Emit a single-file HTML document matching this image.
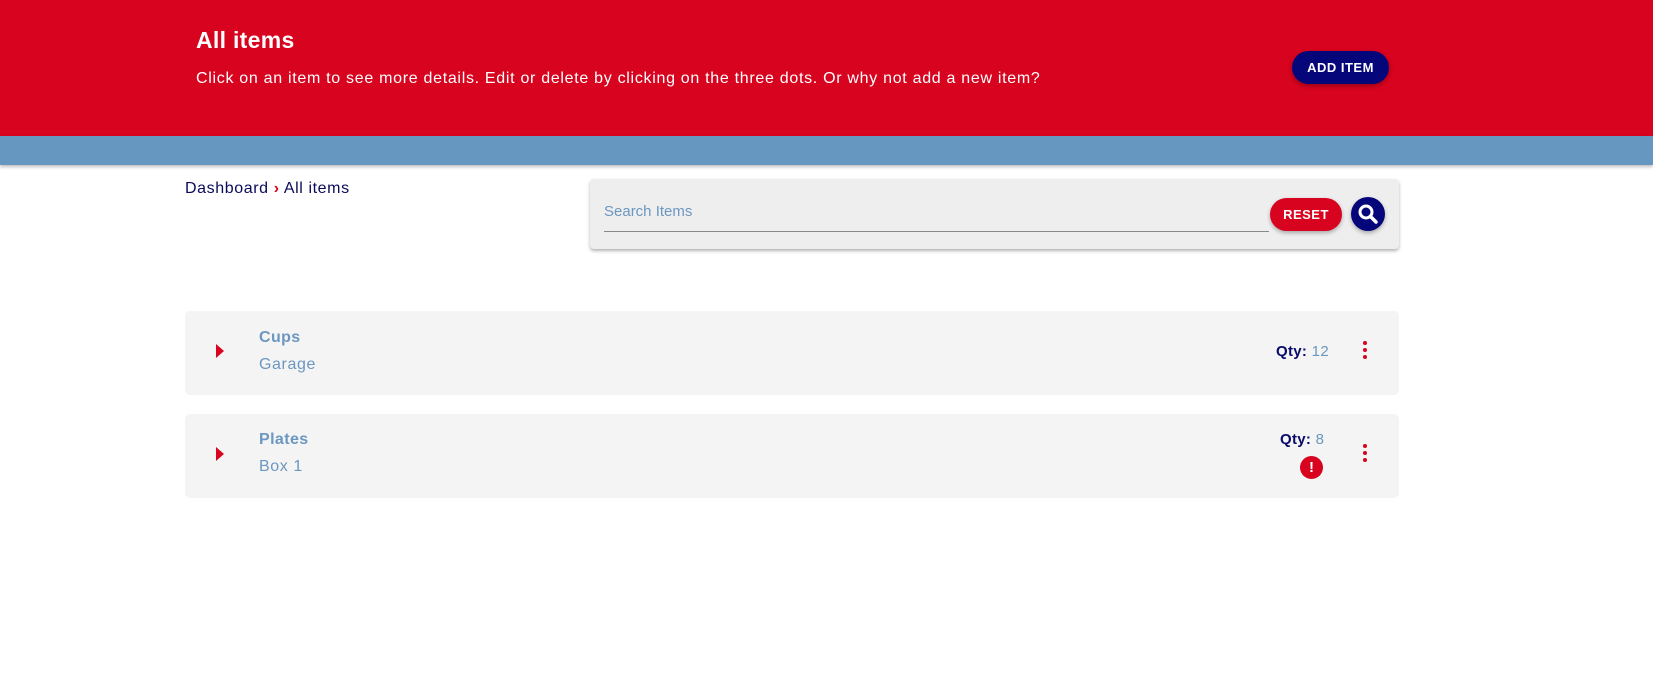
<!DOCTYPE html>
<html><head><style>
body{margin:0;width:1653px;height:697px;background:#fff;font-family:"Liberation Sans",sans-serif;position:relative;overflow:hidden}
.hdr{position:absolute;left:0;top:0;width:1653px;height:136px;background:#d7031f}
.band{position:absolute;left:0;top:136px;width:1653px;height:29px;background:#6697c0;box-shadow:0 2px 3px rgba(0,0,0,.25)}
.t{position:absolute;color:#fff}
.btn{position:absolute;border-radius:20px;color:#fff;font-weight:bold;font-size:13px;text-align:center;box-shadow:0 2px 4px rgba(0,0,0,.3);letter-spacing:.5px}
.card{position:absolute;left:185px;width:1214px;height:84px;background:#f4f4f4;border-radius:5px}
.name{position:absolute;left:74px;color:#6b97c0;font-weight:bold;font-size:16px;letter-spacing:.4px}
.loc{position:absolute;left:74px;color:#6b97c0;font-size:16px;letter-spacing:.6px}
.tri{position:absolute;left:31px;width:0;height:0;border-top:7px solid transparent;border-bottom:7px solid transparent;border-left:8px solid #d7031f}
.dots{position:absolute;left:1178px;width:4px}
.dots i{display:block;width:4px;height:4px;border-radius:2px;background:#d7031f;margin-bottom:3px}
.qty{position:absolute;font-size:15px;color:#0a0a6a;font-weight:bold;letter-spacing:.3px}
.qty span{color:#6b97c0;font-weight:normal}
</style></head><body>
<div class="hdr"></div>
<div class="t" style="left:196px;top:27px;font-size:23px;font-weight:bold;letter-spacing:.3px">All items</div>
<div class="t" style="left:196px;top:70px;font-size:16px;letter-spacing:.7px">Click on an item to see more details. Edit or delete by clicking on the three dots. Or why not add a new item?</div>
<div class="btn" style="left:1292px;top:51px;width:97px;height:33px;line-height:33px;background:#05067a">ADD ITEM</div>
<div class="band"></div>
<div style="position:absolute;left:185px;top:180px;font-size:16px;color:#0a0a5a;letter-spacing:.6px">Dashboard <span style="color:#d7031f;font-weight:bold">›</span> All items</div>
<div style="position:absolute;left:590px;top:179px;width:809px;height:70px;background:#eee;border-radius:4px;box-shadow:0 2px 3px rgba(0,0,0,.3)"></div>
<div style="position:absolute;left:604px;top:203px;color:#6b97c0;font-size:15px">Search Items</div>
<div style="position:absolute;left:604px;top:231px;width:665px;height:1px;background:#888"></div>
<div class="btn" style="left:1270px;top:198px;width:72px;height:33px;line-height:33px;background:#d7031f">RESET</div>
<div style="position:absolute;left:1351px;top:197px;width:34px;height:34px;border-radius:17px;background:#05067a;box-shadow:0 2px 4px rgba(0,0,0,.3)">
<svg width="34" height="34"><circle cx="15" cy="15" r="6" stroke="#fff" stroke-width="3" fill="none"/><line x1="19.5" y1="19.5" x2="25" y2="25" stroke="#fff" stroke-width="3.5" stroke-linecap="round"/></svg></div>
<div class="card" style="top:311px">
<div class="tri" style="top:33px"></div>
<div class="name" style="top:18px">Cups</div>
<div class="loc" style="top:45px">Garage</div>
<div class="qty" style="left:1091px;top:32px">Qty: <span>12</span></div>
<div class="dots" style="top:30px"><i></i><i></i><i></i></div>
</div>
<div class="card" style="top:414px">
<div class="tri" style="top:33px"></div>
<div class="name" style="top:17px">Plates</div>
<div class="loc" style="top:44px">Box 1</div>
<div class="qty" style="left:1095px;top:17px">Qty: <span>8</span></div>
<div style="position:absolute;left:1115px;top:42px;width:23px;height:23px;border-radius:12px;background:#d7031f;color:#fff;font-weight:bold;font-size:15px;text-align:center;line-height:23px">!</div>
<div class="dots" style="top:30px"><i></i><i></i><i></i></div>
</div>
</body></html>
